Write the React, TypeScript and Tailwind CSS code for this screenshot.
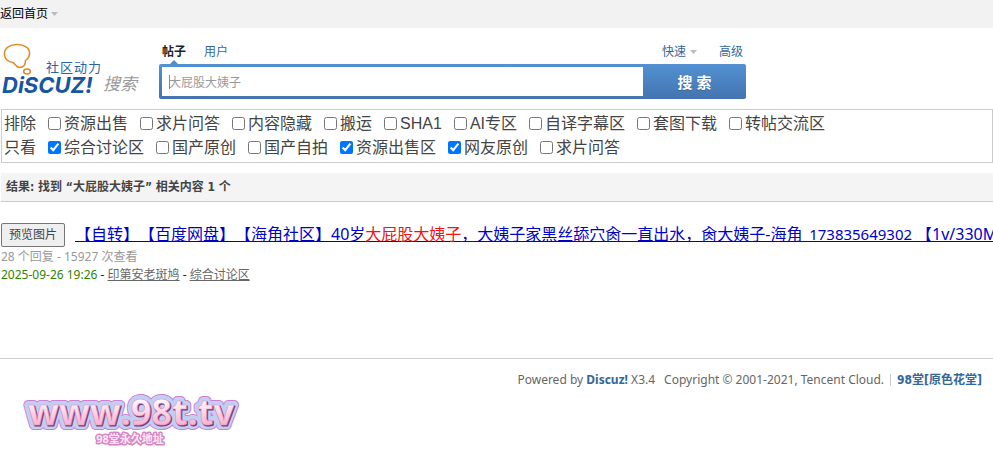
import React from "react";

const excluded = ["资源出售", "求片问答", "内容隐藏", "搬运", "SHA1", "AI专区", "自译字幕区", "套图下载", "转帖交流区"];
const included = [
  { name: "综合讨论区", on: true },
  { name: "国产原创", on: false },
  { name: "国产自拍", on: false },
  { name: "资源出售区", on: true },
  { name: "网友原创", on: true },
  { name: "求片问答", on: false },
];

function Caret() {
  return (
    <svg width="7" height="4" viewBox="0 0 7 4" aria-hidden="true">
      <path d="M0 0h7L3.5 4z" fill="#bbb" />
    </svg>
  );
}

function Check({ name, on }: { name: string; on?: boolean }) {
  return (
    <label className="flex items-center gap-[3px]">
      <input type="checkbox" defaultChecked={on} className="size-[13px] -translate-y-px" />
      {name}
    </label>
  );
}

function FilterRow({ title, children }: { title: string; children: React.ReactNode }) {
  return (
    <div className="flex flex-wrap gap-x-3 leading-6">
      <span>{title}</span>
      {children}
    </div>
  );
}

function Logo() {
  return (
    <svg
      width="142"
      height="58"
      viewBox="0 0 142 58"
      role="img"
      aria-label="Discuz! 社区动力 搜索"
      className="font-['Noto_Sans','Noto_Sans_CJK_SC',sans-serif]"
    >
      <path
        d="M13 20.500C8 20 4 16.500 4.500 11.500C4.500 6 10 2.500 17 2.500C24 2.500 30 6 29.500 11.500C29.500 15 27.500 17 25.500 18.500C25.500 23 23 25.500 19.500 25.500C16 25.500 15.500 22 13 20.500Z"
        fill="none"
        stroke="#de8a26"
        strokeWidth="1.5"
      />
      <ellipse cx="27" cy="29.500" rx="3.300" ry="2.400" fill="none" stroke="#de8a26" strokeWidth="1.500" />
      <text x="46" y="30" fontSize="13" letterSpacing="1" fill="#2a63a5">社区动力</text>
      <text x="2" y="51" fontSize="22" fontFamily="DejaVu Sans" fontWeight="700" fontStyle="italic" fill="#1756a0">
        <tspan fontFamily="Inter">DiSCUZ!</tspan>
      </text>
      <text x="103" y="48" fontSize="17" fontStyle="italic" fill="#999">搜索</text>
    </svg>
  );
}

function Watermark() {
  return (
    <svg
      width="220"
      height="60"
      viewBox="0 0 220 60"
      role="img"
      aria-label="www.98t.tv 98堂永久地址"
      className="overflow-visible font-['Open_Sans','Noto_Sans_CJK_SC',sans-serif]"
    >
      <defs>
        <linearGradient id="pink" x1="0" y1="0" x2="0" y2="1">
          <stop offset="0.3" stopColor="#fff3fa" />
          <stop offset="0.9" stopColor="#f5a0c6" />
        </linearGradient>
        <text id="site" x="111" y="36" fontSize="36" fontWeight="700" textAnchor="middle">www.98t.tv</text>
        <text id="slogan" x="110" y="54" fontSize="11" fontWeight="700" textAnchor="middle">98堂永久地址</text>
      </defs>
      <g strokeLinejoin="round">
        <use href="#site" fill="#cb80d3" stroke="#cb80d3" strokeWidth="10" />
        <use href="#site" fill="#c3cff2" stroke="#c3cff2" strokeWidth="8" />
        <use href="#site" x="1" y="1" fill="#743b7b" stroke="#743b7b" strokeWidth="1" />
        <use href="#site" fill="url(#pink)" stroke="#e58fbe" strokeWidth="0.500" />
        <use href="#slogan" fill="#d685c4" stroke="#d685c4" strokeWidth="3" />
        <use href="#slogan" fill="#ffe9f5" />
      </g>
    </svg>
  );
}

export default function App() {
  return (
    <div className="overflow-x-hidden bg-white font-['Noto_Sans','Noto_Sans_CJK_SC',sans-serif] text-xs text-[#444]">
      <nav className="flex h-7 items-center gap-[3px] bg-[#f2f2f2] text-black">
        <a href="#home">返回首页</a>
        <Caret />
      </nav>

      <header className="flex h-[81px] items-start pt-3.5">
        <a href="#logo" className="w-[159px] shrink-0">
          <Logo />
        </a>
        <form className="w-[587px]" onSubmit={(e) => e.preventDefault()}>
          <div className="flex h-[22px] items-start justify-between px-[3px] leading-[19px] text-[#369]">
            <div className="flex gap-[18px]">
              <a href="#posts" className="relative font-bold text-[#222]">
                帖子
                <svg width="8" height="4" viewBox="0 0 8 4" className="absolute top-[18px] left-2" aria-hidden="true">
                  <path d="M4 0l4 4H0z" fill="#4f8dcb" />
                </svg>
              </a>
              <a href="#users">用户</a>
            </div>
            <div className="flex gap-[22px]">
              <a href="#quick" className="flex items-center gap-1">
                快速
                <Caret />
              </a>
              <a href="#advanced">高级</a>
            </div>
          </div>
          <div className="relative flex h-[35px] rounded-xs bg-linear-to-b from-[#5292d3] to-[#4473b0]">
            <input
              aria-label="搜索帖子"
              defaultValue="大屁股大姨子"
              className="m-[3px] mr-0 min-w-0 flex-1 bg-white px-[7px] pt-0.5 text-xs text-[#999] outline-none"
            />
            <span className="absolute top-[11px] left-2.5 h-3.5 w-px bg-[#888]" />
            <button className="w-[103px] text-[15px] font-bold whitespace-pre text-white text-shadow-xs">搜 索</button>
          </div>
        </form>
      </header>

      <section className="ml-px border border-[#ccc] p-[2px] font-['Liberation_Sans','Noto_Sans_CJK_SC',sans-serif] text-base">
        <FilterRow title="排除">
          {excluded.map((name) => (
            <Check key={name} name={name} />
          ))}
        </FilterRow>
        <FilterRow title="只看">
          {included.map((item) => (
            <Check key={item.name} name={item.name} on={item.on} />
          ))}
        </FilterRow>
      </section>

      <main className="ml-px">
        <h2 className="mt-2.5 border-b border-[#ccc] bg-[#f4f4f4] px-[5px] font-['DejaVu_Sans_Condensed','Noto_Sans_CJK_SC',sans-serif] text-xs leading-7 font-bold">
          结果: 找到 “大屁股大姨子” 相关内容 1 个
        </h2>
        <article className="mt-[21px] pb-[74px]">
          <div className="mb-px flex items-start gap-2.5 whitespace-nowrap">
            <button className="h-6 w-16 shrink-0 rounded-xs border border-[#767676] bg-[#efefef]">预览图片</button>
            <a
              href="#thread"
              className="text-base leading-[22px] text-[#0000cc] underline [font-kerning:none] [text-spacing-trim:space-all]"
            >
              【自转】【百度网盘】【海角社区】40岁<strong className="font-normal text-[#f01414]">大屁股大姨子</strong>
              ，大姨子家黑丝舔穴肏一直出水，肏大姨子-海角<span className="text-[15px]">_173835649302 </span>【1v/330M
            </a>
          </div>
          <p className="leading-[18px] text-[#999]">28 个回复 - 15927 次查看</p>
          <p className="leading-[18px] text-[#222]">
            <time className="text-[#2f8500]">2025-09-26 19:26</time> -{" "}
            <a href="#author" className="text-[#666] underline">印第安老斑鸠</a> -{" "}
            <a href="#forum" className="text-[#666] underline">综合讨论区</a>
          </p>
        </article>
      </main>

      <footer className="border-t border-[#ccc] pt-3 text-[#666]">
        <div className="flex items-center justify-end pr-[11px] leading-[18px]">
          <span>
            Powered by <a href="#discuz" className="font-bold text-[#369]">Discuz!</a> X3.4
          </span>
          <span className="ml-[9px]">Copyright © 2001-2021, Tencent Cloud.</span>
          <span className="mx-[6px] h-3 w-px bg-[#ccc]" />
          <a href="#site-home" className="font-['DejaVu_Sans_Condensed','Noto_Sans_CJK_SC',sans-serif] font-bold text-[#369]">
            98堂[原色花堂]
          </a>
        </div>
        <a href="#watermark" className="ml-5 block w-[220px]">
          <Watermark />
        </a>
      </footer>
    </div>
  );
}
